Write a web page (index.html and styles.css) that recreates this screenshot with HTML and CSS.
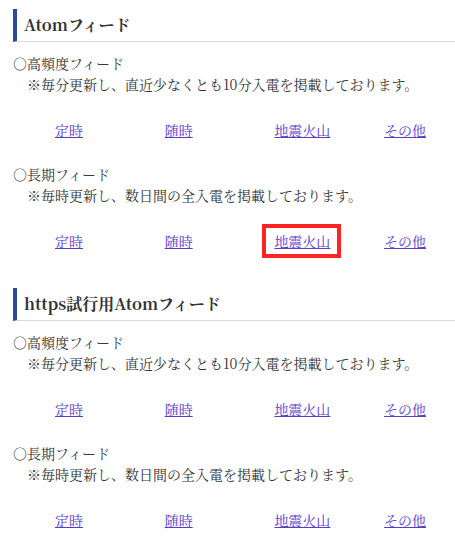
FILE: index.html
```html
<!DOCTYPE html>
<html lang="ja">
<head>
<meta charset="utf-8">
<title>Atomフィード</title>
<link rel="stylesheet" href="styles.css">
</head>
<body>
<div class="page">
  <section class="feed">
    <h2 class="feed-title">Atomフィード</h2>
    <p class="desc">○高頻度フィード<br><span class="note">※毎分更新し、直近少なくとも10分入電を掲載しております。</span></p>
    <div class="links">
      <span><a href="#">定時</a></span>
      <span><a href="#">随時</a></span>
      <span><a href="#">地震火山</a></span>
      <span><a href="#">その他</a></span>
    </div>
    <p class="desc">○長期フィード<br><span class="note">※毎時更新し、数日間の全入電を掲載しております。</span></p>
    <div class="links">
      <span><a href="#">定時</a></span>
      <span><a href="#">随時</a></span>
      <span><span class="mark"><a href="#">地震火山</a></span></span>
      <span><a href="#">その他</a></span>
    </div>
  </section>
  <section class="feed feed-second">
    <h2 class="feed-title">https試行用Atomフィード</h2>
    <p class="desc">○高頻度フィード<br><span class="note">※毎分更新し、直近少なくとも10分入電を掲載しております。</span></p>
    <div class="links">
      <span><a href="#">定時</a></span>
      <span><a href="#">随時</a></span>
      <span><a href="#">地震火山</a></span>
      <span><a href="#">その他</a></span>
    </div>
    <p class="desc">○長期フィード<br><span class="note">※毎時更新し、数日間の全入電を掲載しております。</span></p>
    <div class="links">
      <span><a href="#">定時</a></span>
      <span><a href="#">随時</a></span>
      <span><a href="#">地震火山</a></span>
      <span><a href="#">その他</a></span>
    </div>
  </section>
</div>
</body>
</html>
```
FILE: styles.css
```css
html, body {
  margin: 0;
  padding: 0;
  background: #ffffff;
}
body {
  font-family: "Noto Serif CJK JP", "Liberation Serif", "Noto Sans CJK JP", serif;
  font-size: 14px;
  line-height: 21px;
  color: #333333;
}
.page {
  padding: 9px 0 0 13px;
}
.feed-second {
  margin-top: 36px;
}
.feed-title {
  margin: 0;
  height: 32px;
  line-height: 32px;
  padding-left: 7px;
  border-left: 4px solid #2b4a98;
  border-bottom: 1px solid #d9d9e3;
  font-size: 16px;
  font-weight: bold;
  color: #333333;
}
.desc {
  margin: 11px 0 0;
}
.links + .desc {
  margin-top: 23px;
}
.note {
  padding-left: 14px;
}
.links {
  display: grid;
  grid-template-columns: repeat(3, 109.7px) auto;
  padding-left: 42px;
  margin-top: 25px;
}
.links a {
  color: #5a3cc8;
  text-decoration: underline;
}
.mark {
  display: inline-block;
  border: 4px solid #ff2424;
  padding: 3px 7px 2px 8px;
  margin: -7px -11px -6px -12px;
}
```
